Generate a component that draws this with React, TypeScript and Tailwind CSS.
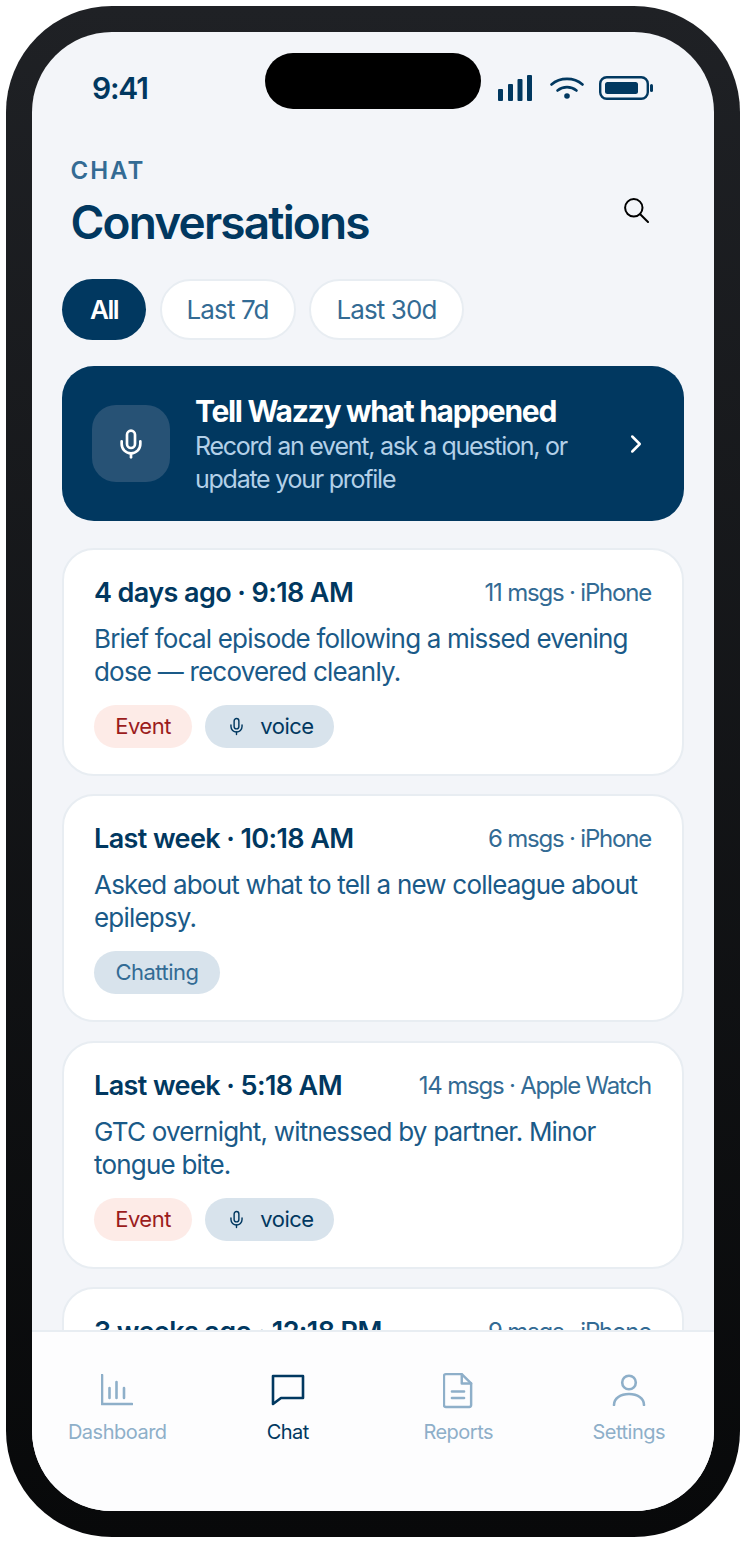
import { ChevronRight, Mic } from "lucide-react";

const sessions = [
  { when: "4 days ago · 9:18 AM", meta: "11 msgs · iPhone", body: "Brief focal episode following a missed evening dose — recovered cleanly.", kind: "event" },
  { when: "Last week · 10:18 AM", meta: "6 msgs · iPhone", body: "Asked about what to tell a new colleague about epilepsy.", kind: "chat" },
  { when: "Last week · 5:18 AM", meta: "14 msgs · Apple Watch", body: "GTC overnight, witnessed by partner. Minor tongue bite.", kind: "event" },
  { when: "3 weeks ago · 12:18 PM", meta: "9 msgs · iPhone", body: "", kind: "" },
];

function StatusIcons() {
  return (
    <div className="flex items-center">
      <svg viewBox="0 0 34 26" className="h-[26px] w-[34px]" fill="#013860">
        <rect x="0" y="14" width="5" height="12" rx="1" />
        <rect x="10" y="9" width="5" height="17" rx="1" />
        <rect x="19.500" y="4" width="5" height="22" rx="1" />
        <rect x="29" y="0" width="5" height="26" rx="1" />
      </svg>
      <svg viewBox="0 0 34 24" className="ml-[18px] h-[24px] w-[34px]" fill="none" stroke="#013860" strokeWidth="2.600" strokeLinecap="round">
        <path d="M1.500 8.500C10 1 24 1 32.500 8.500" />
        <path d="M7.500 14.500C13 10 21 10 26.500 14.500" />
        <circle cx="17" cy="20" r="2.800" fill="#013860" stroke="none" />
      </svg>
      <svg viewBox="0 0 54 24" className="ml-[15px] h-[24px] w-[54px]" fill="none">
        <rect x="1.200" y="1.200" width="47.600" height="21.600" rx="6.500" stroke="#013860" strokeWidth="2.400" />
        <rect x="6" y="6" width="33" height="12" rx="2.500" fill="#013860" />
        <rect x="51" y="8" width="3" height="8" rx="1.500" fill="#013860" />
      </svg>
    </div>
  );
}

function Tag({ kind }: { kind: string }) {
  if (!kind) return null;
  if (kind === "chat") {
    return (
      <div className="flex h-[43px] w-[126px] items-center justify-center rounded-full bg-[#d8e3ec] text-[22px] tracking-[-0.5px] text-[#336b94]">
        Chatting
      </div>
    );
  }
  return (
    <div className="flex gap-[13px]">
      <div className="flex h-[43px] w-[98px] items-center justify-center rounded-full bg-[#fdebe7] text-[22px] tracking-[-0.5px] text-[#9b1c1c]">
        Event
      </div>
      <div className="flex h-[43px] w-[129px] items-center justify-center gap-[14px] rounded-full bg-[#d8e3ec] pl-[2px] text-[22px] tracking-[-0.5px] text-[#013860]">
        <Mic size={19} strokeWidth={1.800} />
        voice
      </div>
    </div>
  );
}

function SessionCard({ when, meta, body, kind }: { when: string; meta: string; body: string; kind: string }) {
  return (
    <div className="mb-[18.300px] h-[228px] shrink-0 rounded-[32px] border-2 border-[#e8edf2] bg-white pl-[30px] pr-[31px] pt-[25px]">
      <div className="flex items-center justify-between">
        <span className="text-[27px] font-semibold leading-[36px] tracking-[-0.6px] text-[#013860]">{when}</span>
        <span className="text-[24px] leading-[36px] tracking-[-1.200px] text-[#336b94]">{meta}</span>
      </div>
      <p className="mt-[11px] text-[26px] leading-[33px] tracking-[-0.8px] text-[#1a5a88]">{body}</p>
      <div className="mt-[17px]">
        <Tag kind={kind} />
      </div>
    </div>
  );
}

function NavItem({ label, active, children }: { label: string; active?: boolean; children: React.ReactNode }) {
  return (
    <div className="flex flex-col items-center">
      <div className="flex h-[42px] w-[42px] items-center justify-center">{children}</div>
      <span className={`mt-[7px] text-[20px] leading-[28px] tracking-[-0.5px] ${active ? "text-[#013860]" : "text-[#8eafc9]"}`}>
        {label}
      </span>
    </div>
  );
}

export default function App() {
  return (
    <div className="bg-white p-[6px] font-['Inter',sans-serif]">
      <div className="h-[1531px] w-[734px] rounded-[106px] bg-gradient-to-b from-[#1f2125] to-[#08090a] p-[26px]">
        <div className="relative flex h-[1479px] w-[682px] flex-col overflow-hidden rounded-[80px] bg-[#f3f5f9]">
          <div className="absolute left-[233px] top-[21px] h-[56px] w-[216px] rounded-full bg-black" />

          <div className="flex h-[112px] shrink-0 items-center justify-between pl-[60px] pr-[61px]">
            <span className="text-[30px] font-semibold tracking-[-1.200px] text-[#013860]">9:41</span>
            <StatusIcons />
          </div>

          <div className="shrink-0 pl-[38.500px] pr-[65px] pt-[12px]">
            <div className="text-[24px] font-semibold leading-[30px] tracking-[2px] text-[#336b94]">CHAT</div>
            <div className="mt-[4px] flex items-center justify-between">
              <h1 className="text-[46px] font-semibold leading-[64px] tracking-[-1.850px] text-[#013860]">Conversations</h1>
              <svg viewBox="0 0 25 25" className="mb-[24px] h-[25px] w-[25px]" fill="none" stroke="black" strokeWidth="2" strokeLinecap="round">
                <circle cx="9.800" cy="9.800" r="8.700" />
                <path d="M16.200 16.200L24 24" />
              </svg>
            </div>
          </div>

          <div className="flex shrink-0 gap-[13.500px] pl-[30px] pt-[25px]">
            <div className="flex h-[61px] w-[84px] items-center justify-center rounded-full bg-[#013860] text-[26px] font-semibold tracking-[-1.500px] text-white">
              All
            </div>
            <div className="flex h-[61px] w-[136px] items-center justify-center rounded-full border-2 border-[#e8edf2] bg-white text-[26px] tracking-[-0.9px] text-[#336b94]">
              Last 7d
            </div>
            <div className="flex h-[61px] w-[155px] items-center justify-center rounded-full border-2 border-[#e8edf2] bg-white text-[26px] tracking-[-0.9px] text-[#336b94]">
              Last 30d
            </div>
          </div>

          <div className="mx-[30px] mt-[26px] flex h-[155px] shrink-0 items-center rounded-[32px] bg-[#013860] pl-[30px] pr-[33px]">
            <div className="flex h-[77px] w-[78px] shrink-0 items-center justify-center rounded-[24px] bg-[#275275]">
              <Mic size={32} strokeWidth={2} className="text-white" />
            </div>
            <div className="ml-[25px] flex-1 pt-[2px]">
              <div className="text-[30px] font-bold leading-[36px] tracking-[-1.300px] text-white">Tell Wazzy what happened</div>
              <div className="mt-[1px] w-[400px] text-[25px] leading-[33px] tracking-[-1.250px] text-[#b3d0e8]">
                Record an event, ask a question, or update your profile
              </div>
            </div>
            <ChevronRight size={30} strokeWidth={2} className="text-white" />
          </div>

          <div className="mt-[27px] flex min-h-0 flex-1 flex-col overflow-hidden px-[30px]">
            {sessions.map((s) => (
              <SessionCard key={s.when} {...s} />
            ))}
          </div>

          <div className="grid h-[181px] shrink-0 grid-cols-4 border-t-2 border-[#e8edf2] bg-[#fdfdfe] pt-[37px]">
            <NavItem label="Dashboard">
              <svg viewBox="0 0 32 32" className="h-[32px] w-[32px]" fill="none" stroke="#8eafc9" strokeWidth="2.600" strokeLinecap="round" strokeLinejoin="round">
                <path d="M1 1v29h30" />
                <path d="M8.500 14v10M15.500 8v16M23 14v10" />
              </svg>
            </NavItem>
            <NavItem label="Chat" active>
              <svg viewBox="0 0 34 32" className="h-[32px] w-[34px]" fill="none" stroke="#013860" strokeWidth="2.600" strokeLinejoin="round">
                <path d="M2 2h30v22H10l-8 6z" />
              </svg>
            </NavItem>
            <NavItem label="Reports">
              <svg viewBox="0 0 32 38" className="h-[37px] w-[30px]" fill="none" stroke="#8eafc9" strokeWidth="2.600" strokeLinecap="round" strokeLinejoin="round">
                <path d="M3 1.500h17l10 10v23a2 2 0 0 1-2 2H3a2 2 0 0 1-2-2v-31a2 2 0 0 1 2-2z" />
                <path d="M20 2v9.500h10M9.500 20h13M9.500 27h13" />
              </svg>
            </NavItem>
            <NavItem label="Settings">
              <svg viewBox="0 0 34 32" className="h-[32px] w-[34px]" fill="none" stroke="#8eafc9" strokeWidth="2.600" strokeLinecap="round">
                <circle cx="17" cy="8.500" r="6.800" />
                <path d="M2 31c0-6.500 6.500-11 15-11s15 4.500 15 11" />
              </svg>
            </NavItem>
          </div>
        </div>
      </div>
    </div>
  );
}
